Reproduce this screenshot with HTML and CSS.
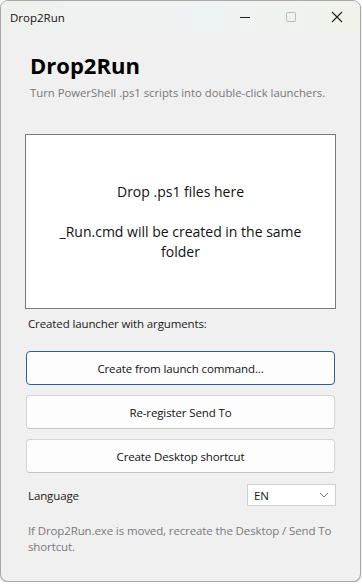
FILE: index.html
```html
<!DOCTYPE html>
<html lang="en">
<head>
  <meta charset="UTF-8" />
  <meta name="viewport" content="width=device-width, initial-scale=1.0"/>
  <title>Drop2Run</title>
  <link rel="stylesheet" href="styles.css">
</head>
<body>
  <div class="window">
    <div class="titlebar">
      <span class="title">Drop2Run</span>
      <div class="controls">
        <span class="ctl">
          <svg width="12" height="12" viewBox="0 0 12 12"><path d="M1 6.5h10" stroke="#222" stroke-width="1"/></svg>
        </span>
        <span class="ctl">
          <svg width="12" height="12" viewBox="0 0 12 12"><rect x="1.5" y="1.5" width="9" height="9" rx="1" fill="none" stroke="#bbb" stroke-width="1"/></svg>
        </span>
        <span class="ctl">
          <svg width="12" height="12" viewBox="0 0 12 12"><path d="M1 1l10 10M11 1L1 11" stroke="#222" stroke-width="1.1"/></svg>
        </span>
      </div>
    </div>

    <div class="content">
      <h1 class="app-name">Drop2Run</h1>
      <p class="subtitle">Turn PowerShell .ps1 scripts into double-click launchers.</p>

      <div class="dropzone" id="dropzone">
        <p>Drop .ps1 files here</p>
        <p>_Run.cmd will be created in the same folder</p>
      </div>

      <div class="hint">Created launcher with arguments:</div>

      <div class="actions">
        <button class="btn btn-default">Create from launch command...</button>
        <button class="btn">Re-register Send To</button>
        <button class="btn">Create Desktop shortcut</button>
      </div>

      <div class="lang-row">
        <label for="lang">Language</label>
        <div class="select">
          <span>EN</span>
          <svg width="10" height="6" viewBox="0 0 10 6"><path d="M1 1l4 4 4-4" fill="none" stroke="#777" stroke-width="1"/></svg>
        </div>
      </div>

      <p class="note">If Drop2Run.exe is moved, recreate the Desktop / Send To shortcut.</p>
    </div>
  </div>
</body>
</html>
```

FILE: styles.css
```css
body {
  margin: 0;
  background: #ffffff;
  font-family: 'Segoe UI', 'Open Sans', 'Noto Sans', sans-serif;
  color: #1a1a1a;
}

.window {
  box-sizing: border-box;
  width: 361px;
  height: 582px;
  border: 1px solid #a8a8a8;
  border-radius: 8px;
  overflow: hidden;
  background: #f0f0f0;
  box-shadow: 0 1px 2px rgba(0,0,0,0.25);
}

.titlebar {
  height: 32px;
  display: flex;
  align-items: center;
  justify-content: space-between;
  background: linear-gradient(90deg, #eef1ee 0%, #eef3f3 60%, #f1f3ea 100%);
}

.title {
  font-size: 11.5px;
  margin-left: 9px;
  color: #111;
}

.controls {
  display: flex;
}

.ctl {
  width: 46px;
  height: 32px;
  display: flex;
  align-items: center;
  justify-content: center;
}

.content {
  padding: 0 24px;
  letter-spacing: -0.12px;
}

.app-name {
  margin: 17px 0 0 5px;
  font-size: 22px;
  line-height: 30px;
  font-weight: 700;
  color: #000;
  letter-spacing: 0;
}

.subtitle {
  margin: 5px 0 0 5px;
  font-size: 11.3px;
  color: #777;
  letter-spacing: 0;
}

.dropzone {
  margin-top: 34px;
  height: 175px;
  box-sizing: border-box;
  background: #fff;
  border: 1px solid #7a7a7a;
  display: flex;
  flex-direction: column;
  justify-content: center;
  align-items: center;
  text-align: center;
  padding: 0 24px;
  font-size: 14px;
  line-height: 20px;
  color: #111;
  letter-spacing: 0;
}

.dropzone p {
  margin: 0;
}

.dropzone p + p {
  margin-top: 20px;
}

.hint {
  margin: 7px 0 0 3px;
  font-size: 11.5px;
}

.actions {
  margin-top: 20px;
  display: flex;
  flex-direction: column;
  gap: 10px;
}

.btn {
  height: 34px;
  background: #fdfdfd;
  border: 1px solid #d4d4d4;
  border-bottom-color: #c4c4c4;
  border-radius: 4px;
  font-family: inherit;
  font-size: 11.5px;
  letter-spacing: -0.12px;
  color: #111;
  margin: 0 1px;
}

.btn-default {
  border: 1px solid #2b5f96;
}

.lang-row {
  margin-top: 11px;
  display: flex;
  align-items: center;
  justify-content: space-between;
  font-size: 11.5px;
  padding-left: 3px;
}

.select {
  width: 89px;
  height: 22px;
  box-sizing: border-box;
  background: #fff;
  border: 1px solid #cfcfcf;
  display: flex;
  align-items: center;
  justify-content: space-between;
  padding: 0 6px 0 6px;
  font-size: 11.5px;
}

.note {
  margin: 17px 0 0 3px;
  font-size: 11.5px;
  line-height: 16px;
  color: #7a7a7a;
}
```
